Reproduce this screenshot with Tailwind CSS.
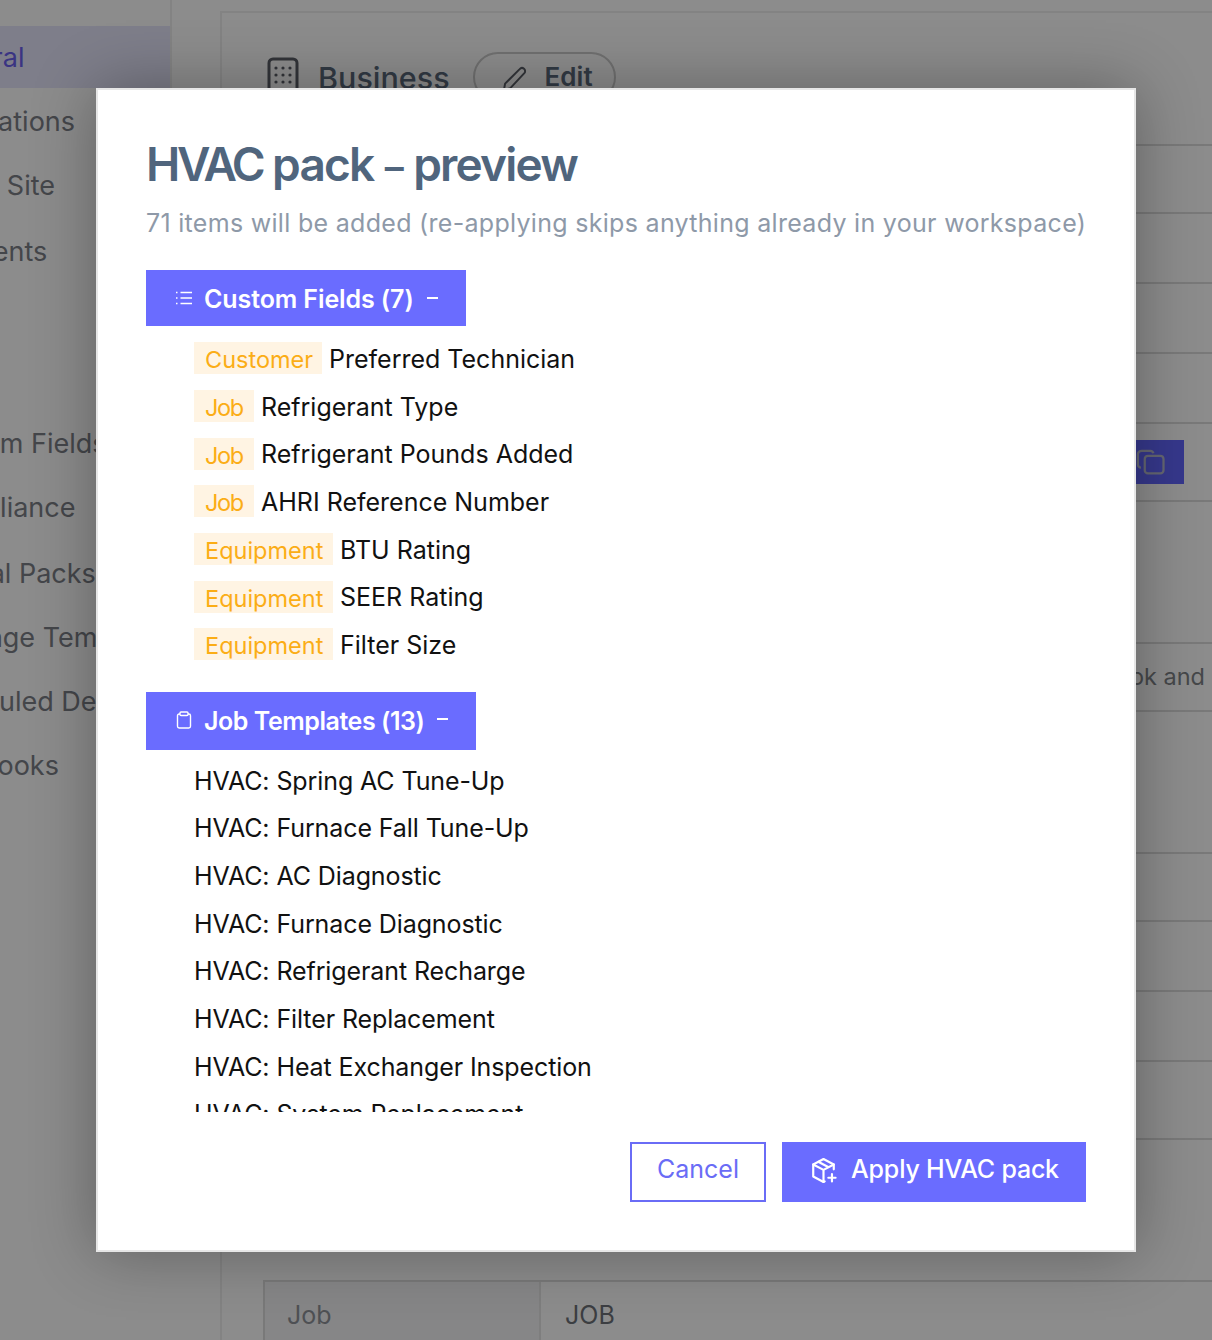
<!DOCTYPE html>
<html lang="en">
<head>
  <meta charset="UTF-8" />
  <title>HVAC pack preview</title>
  <script src="https://cdn.jsdelivr.net/npm/@tailwindcss/browser@4"></script>
</head>
<body class="bg-white font-['Inter',sans-serif]">
  <div class="relative w-[1212px] h-[1340px] overflow-hidden flex bg-white">

    <!-- Sidebar -->
    <aside class="w-[172px] shrink-0 h-[900px] border-r-2 border-[#eeeeee] pt-[26px] overflow-hidden text-[27px] text-[#7c8088]">
      <div class="h-[62px] flex items-center bg-[#e6e6fb] text-[#6a60ee] whitespace-nowrap"><span class="ml-[-75px] mt-[2px]">General</span></div>
      <div class="h-[64px] mt-[2px] flex items-center whitespace-nowrap"><span class="ml-[-86px]">Notifications</span></div>
      <div class="h-[64px] flex items-center whitespace-nowrap"><span class="ml-[-79px]">Public Site</span></div>
      <div class="h-[68px] flex items-center whitespace-nowrap"><span class="ml-[-78px]">Payments</span></div>
      <div class="h-[64px] mt-[126px] flex items-center whitespace-nowrap"><span class="ml-[-75px]">Custom Fields</span></div>
      <div class="h-[64px] flex items-center whitespace-nowrap"><span class="ml-[-76px]">Compliance</span></div>
      <div class="h-[66px] flex items-center whitespace-nowrap"><span class="ml-[-85px] mt-[2px]">Vertical Packs</span></div>
      <div class="h-[64px] flex items-center whitespace-nowrap"><span class="ml-[-81px]">Message Templates</span></div>
      <div class="h-[64px] flex items-center whitespace-nowrap"><span class="ml-[-82px]">Scheduled Delivery</span></div>
      <div class="h-[64px] flex items-center whitespace-nowrap"><span class="ml-[-76px]">Webhooks</span></div>
    </aside>

    <!-- Settings card -->
    <main class="ml-[48px] mt-[11px] flex-1 border-l-2 border-t-2 border-[#eeeeee] pl-[41px]">
      <div class="h-[131px] pl-[4px] flex items-start gap-[23px]">
        <div class="mt-[42px] flex items-center gap-[19px] text-[30.5px] font-medium text-[#5c6b7d]">
          <svg class="w-[32px] h-[42px]" viewBox="0 0 32 42" fill="none" stroke="#5c6068" stroke-width="3"><rect x="2" y="2" width="28" height="38" rx="4"/><g fill="#5c6068" stroke="none"><circle cx="9" cy="11" r="1.6"/><circle cx="16" cy="11" r="1.6"/><circle cx="23" cy="11" r="1.6"/><circle cx="9" cy="18" r="1.6"/><circle cx="16" cy="18" r="1.6"/><circle cx="23" cy="18" r="1.6"/><circle cx="9" cy="25" r="1.6"/><circle cx="16" cy="25" r="1.6"/><circle cx="23" cy="25" r="1.6"/></g></svg>
          <span>Business</span>
        </div>
        <div class="mt-[39px] w-[143px] h-[50px] rounded-full border-2 border-[#cccccc] flex items-center pl-[26px] gap-[16px] text-[26px] font-semibold text-[#5c6b7d]">
          <svg class="w-[28px] h-[30px] mt-[4px]" viewBox="0 0 24 24" fill="none" stroke="#5c6068" stroke-width="1.7" stroke-linejoin="round"><path d="M2.500 21.500l1-5.500L16 3.500a2.500 2.500 0 0 1 4 3.500L8 19.800z"/></svg>
          <span class="mb-[2px]">Edit</span>
        </div>
      </div>
      <div class="h-[68px] border-t-2 border-[#dddddd]"></div>
      <div class="h-[70px] border-t-2 border-[#dddddd]"></div>
      <div class="h-[70px] border-t-2 border-[#dddddd]"></div>
      <div class="h-[70px] border-t-2 border-[#dddddd]"></div>
      <div class="h-[78px] border-t-2 border-[#dddddd] pt-[16px] pr-[28px] flex justify-end">
        <div class="w-[72px] h-[44px] bg-[#6366ff] flex items-center justify-center">
          <svg class="w-[30px] h-[30px] ml-[6px]" viewBox="0 0 24 24" fill="none" stroke="#b8bcd0" stroke-width="1.8" stroke-linejoin="round"><rect x="7" y="7" width="15" height="14" rx="2.500"/><path d="M4 16.500A2.500 2.500 0 0 1 1.500 14V6a3 3 0 0 1 3-3h7a2.500 2.500 0 0 1 2.400 2"/></svg>
        </div>
      </div>
      <div class="h-[142px] border-t-2 border-[#dddddd]"></div>
      <div class="h-[68px] border-t-2 border-[#dddddd] flex items-center justify-end pr-[7px] text-[23.5px] text-[#808388]"><span>Webhook and</span></div>
      <div class="h-[142px] border-t-2 border-[#dddddd]"></div>
      <div class="h-[68px] border-t-2 border-[#dddddd]"></div>
      <div class="h-[70px] border-t-2 border-[#dddddd]"></div>
      <div class="h-[70px] border-t-2 border-[#dddddd]"></div>
      <div class="h-[78px] border-t-2 border-[#dddddd]"></div>
      <div class="h-[142px] border-t-2 border-[#dddddd]"></div>
      <div class="h-[60px] border-t-2 border-l-2 border-[#dddddd] flex text-[25px]">
        <div class="w-[276px] pl-[22px] pt-[15px] bg-[#f4f4f6] text-[#8f9399] border-r-2 border-[#e6e6e6]">Job</div>
        <div class="pl-[24px] pt-[15px] text-[#6e7278]">JOB</div>
      </div>
    </main>

    <!-- Dim layer -->
    <div class="absolute inset-0 bg-black/45"></div>

    <!-- Modal -->
    <div class="absolute left-[96px] top-[88px] w-[1040px] h-[1164px] bg-white border-2 border-[#e6e6e6] shadow-[0_0_60px_rgba(0,0,0,0.32)] px-[48px] flex flex-col">
      <h2 class="mt-[45px] h-[58px] text-[46px] leading-[58px] font-semibold tracking-[-1.8px] text-[#50657d] whitespace-nowrap"><span class="tracking-[-3.4px]">HVAC</span> pack <span class="text-[38px] mx-[1.5px]">–</span> preview</h2>
      <p class="mt-[12px] h-[36px] text-[25px] leading-[36px] tracking-[0.3px] text-[#8e99a8] whitespace-nowrap">71 items will be added (re-applying skips anything already in your workspace)</p>

      <div class="mt-[29px] h-[842px] overflow-hidden text-[25px] text-[#111111]">
        <div class="w-[320px] h-[56px] bg-[#6a6cff] flex items-center pl-[29px] text-white font-semibold">
          <svg class="w-[18px] h-[18px]" viewBox="0 0 18 18" fill="none" stroke="white" stroke-width="1.3"><path d="M5.500 3.500H17M5.500 9H17M5.500 14.500H17M1 3.500h1.500M1 9h1.500M1 14.500h1.500"/></svg>
          <span class="ml-[11px] mt-[3px] tracking-[-0.1px]">Custom Fields (7)</span>
          <span class="ml-[13px] w-[11px] h-[2px] bg-white"></span>
        </div>
        <ul class="pt-[10px] pl-[48px] mb-[22px]">
          <li class="h-[47.67px] flex items-center"><span class="w-[128px] h-[32px] mb-[3px] pl-[11px] bg-[#fff4e3] text-[#fbad16] text-[23.5px] leading-[36px] mr-[7px]">Customer</span>Preferred Technician</li>
          <li class="h-[47.67px] flex items-center"><span class="w-[60px] h-[32px] mb-[3px] pl-[11px] bg-[#fff4e3] text-[#fbad16] text-[23.5px] tracking-[-1.4px] leading-[36px] mr-[7px]">Job</span>Refrigerant Type</li>
          <li class="h-[47.67px] flex items-center"><span class="w-[60px] h-[32px] mb-[3px] pl-[11px] bg-[#fff4e3] text-[#fbad16] text-[23.5px] tracking-[-1.4px] leading-[36px] mr-[7px]">Job</span>Refrigerant Pounds Added</li>
          <li class="h-[47.67px] flex items-center"><span class="w-[60px] h-[32px] mb-[3px] pl-[11px] bg-[#fff4e3] text-[#fbad16] text-[23.5px] tracking-[-1.4px] leading-[36px] mr-[7px]">Job</span>AHRI Reference Number</li>
          <li class="h-[47.67px] flex items-center"><span class="w-[139px] h-[32px] mb-[3px] pl-[11px] bg-[#fff4e3] text-[#fbad16] text-[23.5px] leading-[36px] mr-[7px]">Equipment</span>BTU Rating</li>
          <li class="h-[47.67px] flex items-center"><span class="w-[139px] h-[32px] mb-[3px] pl-[11px] bg-[#fff4e3] text-[#fbad16] text-[23.5px] leading-[36px] mr-[7px]">Equipment</span>SEER Rating</li>
          <li class="h-[47.67px] flex items-center"><span class="w-[139px] h-[32px] mb-[3px] pl-[11px] bg-[#fff4e3] text-[#fbad16] text-[23.5px] leading-[36px] mr-[7px]">Equipment</span>Filter Size</li>
        </ul>

        <div class="w-[330px] h-[58px] bg-[#6a6cff] flex items-center pl-[29px] text-white font-semibold">
          <svg class="w-[18px] h-[20px] mb-[2px]" viewBox="0 0 18 18" fill="none" stroke="white" stroke-width="1.400" stroke-linejoin="round"><path d="M5 3H4.200A1.700 1.700 0 0 0 2.500 4.700v10.600A1.700 1.700 0 0 0 4.200 17h9.600a1.700 1.700 0 0 0 1.700-1.700V4.700A1.700 1.700 0 0 0 13.800 3H13"/><rect x="5" y="1" width="8" height="3.500" rx="1"/></svg>
          <span class="ml-[11px] mt-[2px] tracking-[-0.45px]">Job Templates (13)</span>
          <span class="ml-[13px] mb-[3px] w-[11px] h-[2px] bg-white"></span>
        </div>
        <ul class="pt-[8px] pl-[48px] tracking-[-0.1px]">
          <li class="h-[47.67px] flex items-center">HVAC: Spring AC Tune-Up</li>
          <li class="h-[47.67px] flex items-center">HVAC: Furnace Fall Tune-Up</li>
          <li class="h-[47.67px] flex items-center">HVAC: AC Diagnostic</li>
          <li class="h-[47.67px] flex items-center">HVAC: Furnace Diagnostic</li>
          <li class="h-[47.67px] flex items-center">HVAC: Refrigerant Recharge</li>
          <li class="h-[47.67px] flex items-center">HVAC: Filter Replacement</li>
          <li class="h-[47.67px] flex items-center">HVAC: Heat Exchanger Inspection</li>
          <li class="h-[47.67px] flex items-center">HVAC: System Replacement</li>
          <li class="h-[47.67px] flex items-center">HVAC: Duct Cleaning</li>
        </ul>
      </div>

      <div class="mt-[30px] flex justify-end gap-[16px] text-[25px]">
        <button class="w-[136px] h-[60px] border-2 border-[#6a6cf6] text-[#6a6cf6] pb-[5px]">Cancel</button>
        <button class="w-[304px] h-[60px] bg-[#6a6cff] text-white font-medium tracking-[-0.2px] flex items-center justify-center gap-[13px] pb-[5px]">
          <svg class="w-[29px] h-[29px] mt-[2px]" viewBox="0 0 24 24" fill="none" stroke="white" stroke-width="1.800" stroke-linecap="round" stroke-linejoin="round"><path d="M20.500 11V7L12 2.500 3.500 7v10l8.500 4.500 1-.5"/><path d="M3.500 7 12 11.500 20.500 7M12 11.500v10M7.700 4.800l8.500 4.500"/><path d="M16 18h6M19 15v6"/></svg>
          <span>Apply HVAC pack</span>
        </button>
      </div>
    </div>
  </div>
</body>
</html>
